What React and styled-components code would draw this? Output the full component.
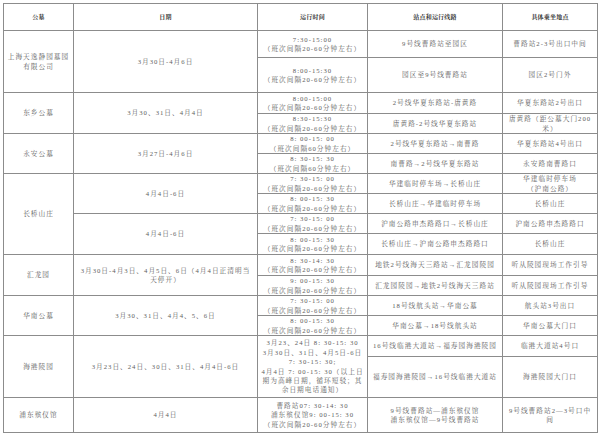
import React from "react";
import styled, { createGlobalStyle } from "styled-components";

const Global = createGlobalStyle`
  html, body { margin: 0; padding: 0; background: #fff; }
  body { width: 600px; height: 435px; overflow: hidden; }
`;

const Page = styled.div`
  padding: 3px 3px 0 3px;
`;

const Table = styled.table`
  width: 594px;
  border-collapse: collapse;
  table-layout: fixed;
  font-family: "Liberation Serif", "Noto Serif CJK SC", "Noto Sans CJK SC", serif;
  font-size: 6.7px;
  letter-spacing: 1px;
  color: #5e5e5e;
`;

const Row = styled.tr`
  height: ${(p) => p.$h}px;
`;

const Th = styled.th`
  border: 1px solid #8c8c8c;
  font-weight: 700;
  color: #333;
  font-size: 6px;
  letter-spacing: 0.2px;
  padding: 0;
  line-height: 9px;
  text-align: center;
  vertical-align: middle;
`;

const Td = styled.td`
  border: 1px solid #8c8c8c;
  text-align: center;
  vertical-align: middle;
  line-height: 9.4px;
  padding: 0 1px;
  white-space: nowrap;
  overflow: hidden;
`;

const Lines = ({ children }) =>
  children.split("\n").map((l, i, a) => (
    <React.Fragment key={i}>
      {l}
      {i < a.length - 1 && <br />}
    </React.Fragment>
  ));

const GAP = "（班次间隔20-60分钟左右）";
const GAP60 = "（班次间隔60分钟左右）";

export default function App() {
  return (
    <Page>
      <Global />
      <Table>
        <colgroup>
          <col style={{ width: 70 }} />
          <col style={{ width: 184 }} />
          <col style={{ width: 110 }} />
          <col style={{ width: 135 }} />
          <col style={{ width: 95 }} />
        </colgroup>
        <tbody>
          <Row $h={27}>
            <Th>公墓</Th>
            <Th>日期</Th>
            <Th>运行时间</Th>
            <Th>站点和运行线路</Th>
            <Th>具体乘坐地点</Th>
          </Row>

          <Row $h={27}>
            <Td rowSpan={2}><Lines>{"上海天逸静园墓园\n有限公司"}</Lines></Td>
            <Td rowSpan={2}>3月30日-4月6日</Td>
            <Td><Lines>{"7:30-15:00\n" + GAP}</Lines></Td>
            <Td>9号线曹路站至园区</Td>
            <Td>曹路站2-3号出口中间</Td>
          </Row>
          <Row $h={35}>
            <Td><Lines>{"8:00-15:30\n" + GAP}</Lines></Td>
            <Td>园区至9号线曹路站</Td>
            <Td>园区2号门外</Td>
          </Row>

          <Row $h={21}>
            <Td rowSpan={2}>东乡公墓</Td>
            <Td rowSpan={2}>3月30、31日、4月4日</Td>
            <Td><Lines>{"8:00-15:00\n" + GAP}</Lines></Td>
            <Td>2号线华夏东路站-唐黄路</Td>
            <Td>华夏东路站2号出口</Td>
          </Row>
          <Row $h={20}>
            <Td><Lines>{"8:30-15:30\n" + GAP}</Lines></Td>
            <Td>唐黄路-2号线华夏东路站</Td>
            <Td><Lines>{"唐黄路（距公墓大门200\n米）"}</Lines></Td>
          </Row>

          <Row $h={20}>
            <Td rowSpan={2}>永安公墓</Td>
            <Td rowSpan={2}>3月27日-4月6日</Td>
            <Td><Lines>{"8: 00-15: 00\n" + GAP60}</Lines></Td>
            <Td>2号线华夏东路站→南曹路</Td>
            <Td>华夏东路站4号出口</Td>
          </Row>
          <Row $h={20}>
            <Td><Lines>{"8: 30-15: 30\n" + GAP60}</Lines></Td>
            <Td>南曹路→2号线华夏东路站</Td>
            <Td>永安路南曹路口</Td>
          </Row>

          <Row $h={20}>
            <Td rowSpan={4}>长桥山庄</Td>
            <Td rowSpan={2}>4月4日-6日</Td>
            <Td><Lines>{"7: 30-15: 00\n" + GAP}</Lines></Td>
            <Td>华建临时停车场→长桥山庄</Td>
            <Td><Lines>{"华建临时停车场\n（沪南公路）"}</Lines></Td>
          </Row>
          <Row $h={20}>
            <Td><Lines>{"8: 00-15: 30\n" + GAP}</Lines></Td>
            <Td>长桥山庄→华建临时停车场</Td>
            <Td>长桥山庄</Td>
          </Row>
          <Row $h={20}>
            <Td rowSpan={2}>4月4日-6日</Td>
            <Td><Lines>{"7: 30-15: 00\n" + GAP}</Lines></Td>
            <Td>沪南公路申杰路路口→长桥山庄</Td>
            <Td>沪南公路申杰路路口</Td>
          </Row>
          <Row $h={21}>
            <Td><Lines>{"8: 00-15: 30\n" + GAP}</Lines></Td>
            <Td>长桥山庄→沪南公路申杰路路口</Td>
            <Td>长桥山庄</Td>
          </Row>

          <Row $h={21}>
            <Td rowSpan={2}>汇龙园</Td>
            <Td rowSpan={2}><Lines>{"3月30日-4月3日、4月5日、6日（4月4日正清明当\n天停开）"}</Lines></Td>
            <Td><Lines>{"8: 30-14: 30\n" + GAP}</Lines></Td>
            <Td>地铁2号线海天三路站→汇龙园陵园</Td>
            <Td>听从陵园现场工作引导</Td>
          </Row>
          <Row $h={20}>
            <Td><Lines>{"9: 00-15: 30\n" + GAP}</Lines></Td>
            <Td>汇龙园陵园→地铁2号线海天三路站</Td>
            <Td>听从陵园现场工作引导</Td>
          </Row>

          <Row $h={20}>
            <Td rowSpan={2}>华南公墓</Td>
            <Td rowSpan={2}>3月30、31日、4月4、5、6日</Td>
            <Td><Lines>{"7: 30-15: 00\n" + GAP}</Lines></Td>
            <Td>18号线航头站→华南公墓</Td>
            <Td>航头站3号出口</Td>
          </Row>
          <Row $h={20}>
            <Td><Lines>{"8: 00-15: 30\n" + GAP}</Lines></Td>
            <Td>华南公墓→18号线航头站</Td>
            <Td>华南公墓大门口</Td>
          </Row>

          <Row $h={21}>
            <Td rowSpan={2}>海港陵园</Td>
            <Td rowSpan={2}>3月23日、24日、30日、31日、4月4日-6日</Td>
            <Td rowSpan={2}>
              <Lines>
                {"3月23、24日 8: 30-15: 30\n3月30日、31日、4月5日-6日\n7: 30-15: 30;\n4月4日  7: 00-15: 30（以上日\n期为高峰日期，循环短驳；其\n余日期电话通知）"}
              </Lines>
            </Td>
            <Td>16号线临港大道站→福寿园海港陵园</Td>
            <Td>临港大道站4号口</Td>
          </Row>
          <Row $h={41}>
            <Td>福寿园海港陵园→16号线临港大道站</Td>
            <Td>海港陵园大门口</Td>
          </Row>

          <Row $h={35}>
            <Td>浦东殡仪馆</Td>
            <Td>4月4日</Td>
            <Td><Lines>{"曹路站07: 30-14: 30\n浦东殡仪馆9: 00-15: 30\n" + GAP}</Lines></Td>
            <Td><Lines>{"9号线曹路站—浦东殡仪馆\n浦东殡仪馆—9号线曹路站"}</Lines></Td>
            <Td><Lines>{"9号线曹路站2—3号口中\n间"}</Lines></Td>
          </Row>
        </tbody>
      </Table>
    </Page>
  );
}
